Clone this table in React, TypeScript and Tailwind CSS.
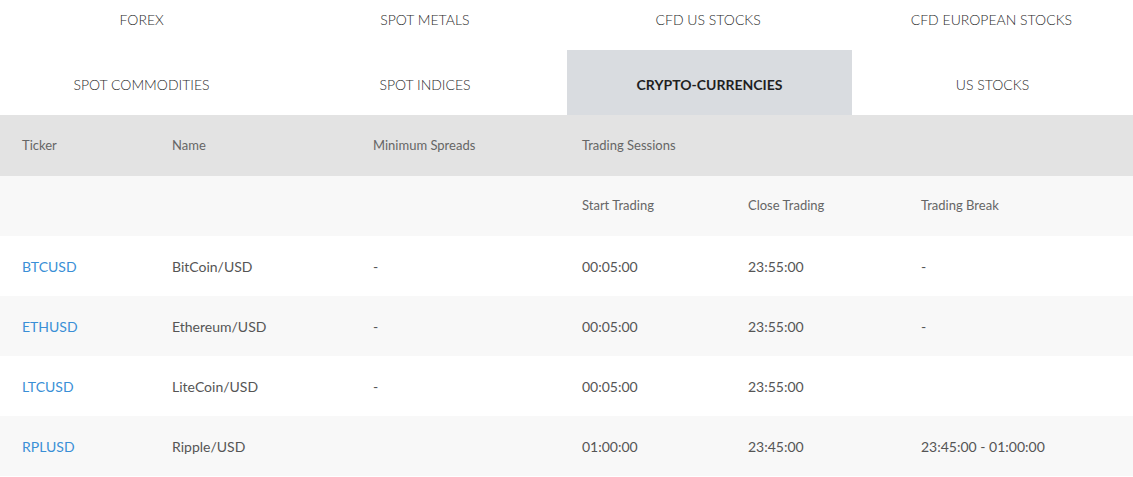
const tabsTop = ['FOREX', 'SPOT METALS', 'CFD US STOCKS', 'CFD EUROPEAN STOCKS'];
const tabsBottom = ['SPOT COMMODITIES', 'SPOT INDICES', 'CRYPTO-CURRENCIES', 'US STOCKS'];

const rows = [
  { ticker: 'BTCUSD', name: 'BitCoin/USD', spread: '-', start: '00:05:00', close: '23:55:00', brk: '-' },
  { ticker: 'ETHUSD', name: 'Ethereum/USD', spread: '-', start: '00:05:00', close: '23:55:00', brk: '-' },
  { ticker: 'LTCUSD', name: 'LiteCoin/USD', spread: '-', start: '00:05:00', close: '23:55:00', brk: '' },
  { ticker: 'RPLUSD', name: 'Ripple/USD', spread: '', start: '01:00:00', close: '23:45:00', brk: '23:45:00 - 01:00:00' },
];

const cols = 'grid grid-cols-[150px_201px_209px_166px_173px_1fr]';

export default function App() {
  return (
    <div className="w-[1133px] h-[477px] overflow-hidden bg-white font-['Lato',sans-serif]">
      <div className="grid grid-cols-4 h-[50px] text-[14px] font-light text-[#2b2b2b]">
        {tabsTop.map((t) => (
          <div key={t} className="flex justify-center pt-[9px]">
            {t}
          </div>
        ))}
      </div>
      <div className="grid grid-cols-[283px_284px_285px_1fr] h-[65px] text-[14px] text-[#2b2b2b]">
        {tabsBottom.map((t) => {
          const active = t === 'CRYPTO-CURRENCIES';
          return (
            <div
              key={t}
              className={
                active
                  ? 'flex items-center justify-center pt-[3px] bg-[#d9dce0] font-bold text-[#1f1f1f]'
                  : 'flex items-center justify-center pt-[3px] font-light'
              }
            >
              {t}
            </div>
          );
        })}
      </div>

      <div className="text-[13px] text-[#666]">
        <div className={`${cols} h-[61px] items-center bg-[#e3e3e3]`}>
          <div className="px-[22px]">Ticker</div>
          <div className="px-[22px]">Name</div>
          <div className="px-[22px]">Minimum Spreads</div>
          <div className="col-span-3 px-[22px]">Trading Sessions</div>
        </div>
        <div className={`${cols} h-[60px] items-center bg-[#f8f8f8]`}>
          <div />
          <div />
          <div />
          <div className="px-[22px]">Start Trading</div>
          <div className="px-[22px]">Close Trading</div>
          <div className="px-[22px]">Trading Break</div>
        </div>
      </div>

      <div className="text-[14px] text-[#555]">
        {rows.map((r, i) => (
          <div key={r.ticker} className={`${cols} h-[60px] items-center ${i % 2 ? 'bg-[#f8f8f8]' : 'bg-white'}`}>
            <div className="px-[22px] text-[#3a8fd6]">{r.ticker}</div>
            <div className="px-[22px]">{r.name}</div>
            <div className="px-[22px]">{r.spread}</div>
            <div className="px-[22px]">{r.start}</div>
            <div className="px-[22px]">{r.close}</div>
            <div className="px-[22px]">{r.brk}</div>
          </div>
        ))}
      </div>
    </div>
  );
}
